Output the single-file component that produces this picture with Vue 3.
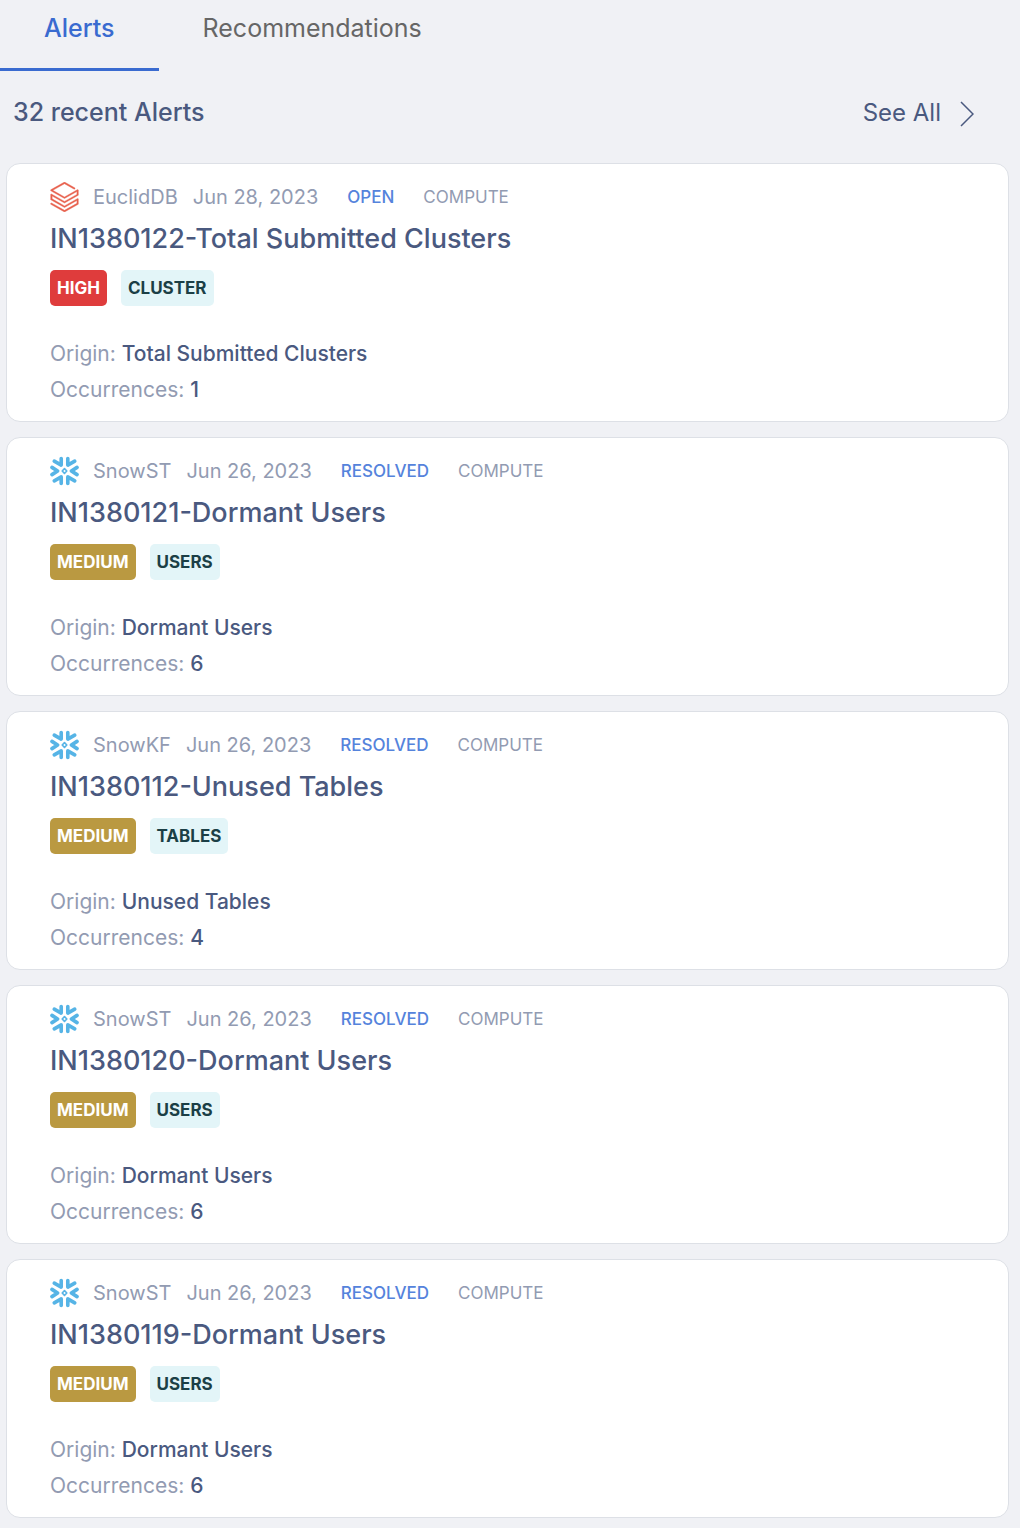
<template>
  <main class="alerts-page">
    <nav class="tabs">
      <button
        v-for="tab in tabs"
        :key="tab"
        type="button"
        class="tab"
        :class="{ active: tab === activeTab }"
        @click="activeTab = tab"
      >
        {{ tab }}
      </button>
    </nav>

    <header class="summary">
      <h1 class="summary-title">32 recent Alerts</h1>
      <a href="#" class="see-all">
        See All
        <svg class="chevron" viewBox="0 0 14 26" aria-hidden="true">
          <path d="M1 1 L13 13 L1 25" />
        </svg>
      </a>
    </header>

    <section class="alert-list">
      <article v-for="alert in alerts" :key="alert.title" class="card">
        <div class="meta">
          <svg v-if="alert.source === 'EuclidDB'" class="icon" viewBox="0.6 0 22.8 24" aria-hidden="true">
            <path
              fill="#e8614d"
              stroke="#e8614d"
              stroke-width="0.3"
              d="M.95 14.184L12 20.403l9.919-5.55v2.21L12 22.662l-10.484-5.96-.565.308v.77L12 24l11.05-6.218v-4.317l-.515-.309L12 19.118l-9.867-5.653v-2.21L12 16.805l11.05-6.218V6.32l-.515-.308L12 11.974 2.647 6.681 12 1.388l7.76 4.368.668-.411v-.566L12 0 .95 6.27v.72L12 13.207l9.919-5.55v2.26L12 15.52 1.516 9.56l-.565.308z"
            />
          </svg>
          <svg v-else class="icon" viewBox="0 0 88 88" aria-hidden="true">
            <g fill="none" stroke="#56b4e6" stroke-width="11" stroke-linecap="round" stroke-linejoin="round">
              <path d="M34 6 V26 L13 14 M54 6 V26 L75 14" />
              <path d="M34 82 V62 L13 74 M54 82 V62 L75 74" />
              <path d="M6 33 L23 44 L6 55 M82 33 L65 44 L82 55" />
              <path d="M44 37 L51 44 L44 51 L37 44 Z" stroke-width="5" />
            </g>
          </svg>
          <span class="source">{{ alert.source }}</span>
          <span class="date">{{ alert.date }}</span>
          <span class="status">{{ alert.status }}</span>
          <span class="category">COMPUTE</span>
        </div>
        <h2 class="title">{{ alert.title }}</h2>
        <div class="tags">
          <span class="tag" :class="alert.severity.toLowerCase()">{{ alert.severity }}</span>
          <span class="tag">{{ alert.tag }}</span>
        </div>
        <p class="detail">Origin: <span class="value">{{ alert.origin }}</span></p>
        <p class="detail">Occurrences: <span class="value">{{ alert.occurrences }}</span></p>
      </article>
    </section>
  </main>
</template>

<script setup>
import { ref } from 'vue'

const tabs = ['Alerts', 'Recommendations']
const activeTab = ref('Alerts')

const alerts = [
  {
    source: 'EuclidDB',
    date: 'Jun 28, 2023',
    status: 'OPEN',
    title: 'IN1380122-Total Submitted Clusters',
    severity: 'HIGH',
    tag: 'CLUSTER',
    origin: 'Total Submitted Clusters',
    occurrences: 1,
  },
  {
    source: 'SnowST',
    date: 'Jun 26, 2023',
    status: 'RESOLVED',
    title: 'IN1380121-Dormant Users',
    severity: 'MEDIUM',
    tag: 'USERS',
    origin: 'Dormant Users',
    occurrences: 6,
  },
  {
    source: 'SnowKF',
    date: 'Jun 26, 2023',
    status: 'RESOLVED',
    title: 'IN1380112-Unused Tables',
    severity: 'MEDIUM',
    tag: 'TABLES',
    origin: 'Unused Tables',
    occurrences: 4,
  },
  {
    source: 'SnowST',
    date: 'Jun 26, 2023',
    status: 'RESOLVED',
    title: 'IN1380120-Dormant Users',
    severity: 'MEDIUM',
    tag: 'USERS',
    origin: 'Dormant Users',
    occurrences: 6,
  },
  {
    source: 'SnowST',
    date: 'Jun 26, 2023',
    status: 'RESOLVED',
    title: 'IN1380119-Dormant Users',
    severity: 'MEDIUM',
    tag: 'USERS',
    origin: 'Dormant Users',
    occurrences: 6,
  },
]
</script>

<style>
body {
  background: #f0f1f5;
}
</style>

<style scoped>
.alerts-page {
  font-family: Inter, 'Liberation Sans', sans-serif;
  color: #4a597f;
  padding-bottom: 10px;
}

.tabs {
  display: flex;
}

.tab {
  border: none;
  border-bottom: 3px solid transparent;
  background: none;
  font-family: inherit;
  font-size: 25px;
  line-height: 32px;
  color: #666;
  padding: 12px 44px 24px;
  cursor: pointer;
}

.tab.active {
  color: #3a6bd0;
  border-bottom-color: #3a6bd0;
  font-weight: 500;
}

.summary {
  display: flex;
  justify-content: space-between;
  align-items: center;
  height: 82px;
  padding: 0 46px 10px 13px;
}

.summary-title {
  margin: 0;
  font-size: 25px;
  font-weight: 500;
}

.see-all {
  display: flex;
  align-items: flex-end;
  gap: 19px;
  font-size: 24px;
  color: inherit;
  text-decoration: none;
}

.chevron {
  width: 14px;
  height: 26px;
  fill: none;
  stroke: #4a597f;
  stroke-width: 1.5;
}

.alert-list {
  display: flex;
  flex-direction: column;
  gap: 15px;
  margin: 0 11px 0 6px;
}

.card {
  background: #fff;
  border: 1px solid #dde0e6;
  border-radius: 14px;
  padding: 16px 43px 13px;
}

.meta {
  display: flex;
  align-items: center;
  height: 34px;
  font-size: 20px;
  color: #929bb2;
}

.icon {
  width: 29px;
  height: 30px;
}

.source {
  margin-left: 14px;
}

.date {
  margin-left: 15px;
}

.status,
.category {
  margin-left: 29px;
  font-size: 17px;
}

.status {
  color: #5583dc;
  font-weight: 500;
}

.title {
  margin: 0 0 6px;
  font-size: 27px;
  line-height: 50px;
  font-weight: 500;
}

.tags {
  display: flex;
  gap: 14px;
  margin-bottom: 30px;
}

.tag {
  padding: 0 7px;
  border-radius: 5px;
  background: #e3f5f8;
  color: #1b3f46;
  font-size: 17px;
  line-height: 36px;
  font-weight: 700;
}

.tag.high {
  background: #df3c3c;
  color: #fff;
}

.tag.medium {
  background: #ba9941;
  color: #fff;
}

.detail {
  margin: 0;
  font-size: 21px;
  line-height: 36px;
  color: #929bb2;
}

.value {
  color: #4a597f;
  font-weight: 500;
}
</style>
